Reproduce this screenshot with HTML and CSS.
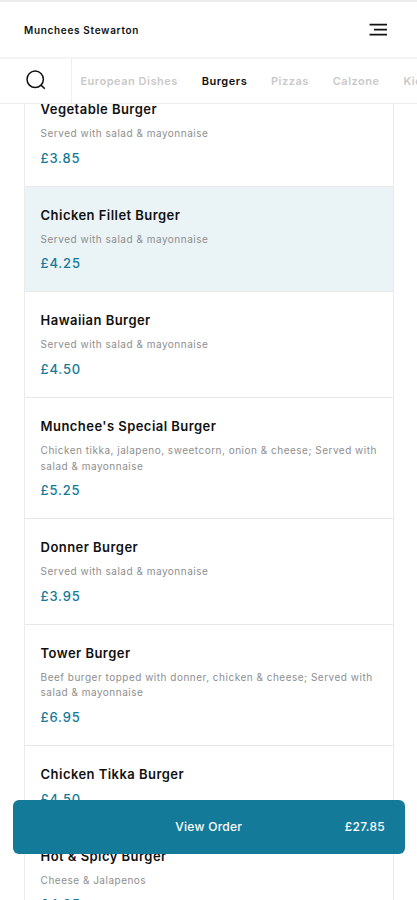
FILE: index.html
```html
<!DOCTYPE html>
<html lang="en">
<head>
<meta charset="utf-8">
<title>Munchees Stewarton</title>
<link rel="stylesheet" href="styles.css">
</head>
<body>
<div class="app">
  <header class="header">
    <h1 class="brand">Munchees Stewarton</h1>
    <svg class="menu-icon" width="18" height="14" viewBox="0 0 18 14" fill="none" stroke="#111"><path stroke-width="1.7" d="M0.5 1.6H18M5 6.6H18M0.5 11.7H18"/></svg>
  </header>
  <nav class="nav">
    <div class="search"><svg width="22" height="22" viewBox="0 0 22 22" fill="none" stroke="#111" stroke-width="1.5"><circle cx="9.2" cy="9.3" r="8.2"/><path d="M15 15.1L18.8 18.7"/></svg></div>
    <div class="tabs">
      <span class="tab">European Dishes</span>
      <span class="tab active">Burgers</span>
      <span class="tab">Pizzas</span>
      <span class="tab">Calzone</span>
      <span class="tab">Kids Meals</span>
    </div>
  </nav>
  <main class="menu">
    <div class="list">
      <article class="item"><h2 class="name">Vegetable Burger</h2><p class="desc">Served with salad &amp; mayonnaise</p><div class="price">£3.85</div></article>
      <article class="item selected"><h2 class="name">Chicken Fillet Burger</h2><p class="desc">Served with salad &amp; mayonnaise</p><div class="price">£4.25</div></article>
      <article class="item"><h2 class="name">Hawaiian Burger</h2><p class="desc">Served with salad &amp; mayonnaise</p><div class="price">£4.50</div></article>
      <article class="item"><h2 class="name">Munchee's Special Burger</h2><p class="desc">Chicken tikka, jalapeno, sweetcorn, onion &amp; cheese; Served with salad &amp; mayonnaise</p><div class="price">£5.25</div></article>
      <article class="item"><h2 class="name">Donner Burger</h2><p class="desc">Served with salad &amp; mayonnaise</p><div class="price">£3.95</div></article>
      <article class="item"><h2 class="name">Tower Burger</h2><p class="desc">Beef burger topped with donner, chicken &amp; cheese; Served with salad &amp; mayonnaise</p><div class="price">£6.95</div></article>
      <article class="item"><h2 class="name">Chicken Tikka Burger</h2><div class="price">£4.50</div></article>
      <article class="item"><h2 class="name">Hot &amp; Spicy Burger</h2><p class="desc">Cheese &amp; Jalapenos</p><div class="price">£4.25</div></article>
    </div>
  </main>
  <div class="order"><span></span><span>View Order</span><span class="total">£27.85</span></div>
</div>
</body>
</html>
```
FILE: styles.css
```css
* { box-sizing: border-box; }
body, h1, h2, p { margin: 0; }
body { font-family: Inter, "Liberation Sans", sans-serif; color: #111; background: #fff; }
.app { position: relative; display: flex; flex-direction: column; height: 900px; overflow: hidden; }
.header { flex: none; height: 59px; display: flex; align-items: center; justify-content: space-between; padding: 0 30px 0 24px; border-top: 2px solid #ececec; border-bottom: 2px solid #f5f5f5; }
.brand { font-size: 10px; font-weight: 600; letter-spacing: 0.68px; line-height: 16px; }
.menu-icon { display: block; }
.nav { flex: none; height: 45px; display: flex; border-bottom: 1px solid #ececec; }
.search { flex: none; width: 72px; padding: 11px 0 0 25.5px; border-right: 1px solid #efefef; }
.search svg { display: block; }
.tabs { flex: 1; display: flex; align-items: center; gap: 23.8px; padding-left: 8.4px; overflow: hidden; white-space: nowrap; font-size: 11px; font-weight: 600; letter-spacing: 0.52px; color: #c9c9c9; }
.tab.active { color: #111; }
.menu { flex: 1; min-height: 0; overflow: hidden; padding: 0 23.5px; }
.list { margin-top: -23.9px; border: solid #ebebeb; border-width: 0 1px; }
.item { padding: 16.9px 14px 18px 16.1px; border-top: 1px solid #e8e8e8; }
.selected { background: #eaf3f5; }
.name { font-size: 13px; line-height: 22px; font-weight: 600; letter-spacing: 0.45px; }
.desc { margin: 6.1px 0 0; font-size: 10px; line-height: 15.7px; letter-spacing: 0.5px; color: #8e8e8e; }
.price { margin-top: 3.8px; font-size: 13px; line-height: 20px; font-weight: 500; letter-spacing: 0.8px; color: #147a99; }
.desc + .price { margin-top: 5.9px; }
.order { position: absolute; left: 12.5px; right: 12px; top: 799.5px; height: 54px; display: grid; grid-template-columns: 1fr auto 1fr; align-items: center; padding: 0 20px; border-radius: 6px; background: #147a99; color: #fff; font-size: 12px; font-weight: 500; letter-spacing: 0.28px; }
.total { text-align: right; }
```
